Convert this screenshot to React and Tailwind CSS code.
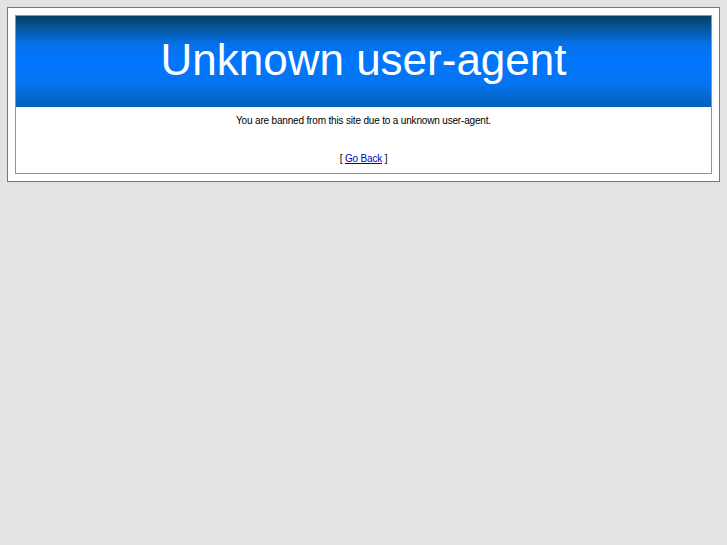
export default function App() {
  return (
    <div className="min-h-[545px] bg-[#e3e3e3] pt-[7px] px-[7px] font-['Liberation_Sans',Arial,sans-serif]">
      <div className="border border-[#3c89b8] bg-white p-[7px]">
        <div className="border border-[#64a3c9]">
          <div className="h-[91px] flex items-center justify-center bg-[linear-gradient(to_bottom,#063f66_0%,#0559a3_15%,#0670e6_30%,#0077ff_50%,#0573ef_75%,#0560b8_100%)]">
            <h1 className="text-white text-[44px] leading-none pb-[4px]">Unknown user-agent</h1>
          </div>
          <div className="h-[66px] text-center text-[10px] leading-[12px] tracking-[-0.17px] text-black">
            <p className="pt-[8px]">You are banned from this site due to a unknown user-agent.</p>
            <p className="pt-[26px]">
              [ <a href="#" className="text-[#0000cc] underline">Go Back</a> ]
            </p>
          </div>
        </div>
      </div>
    </div>
  );
}
